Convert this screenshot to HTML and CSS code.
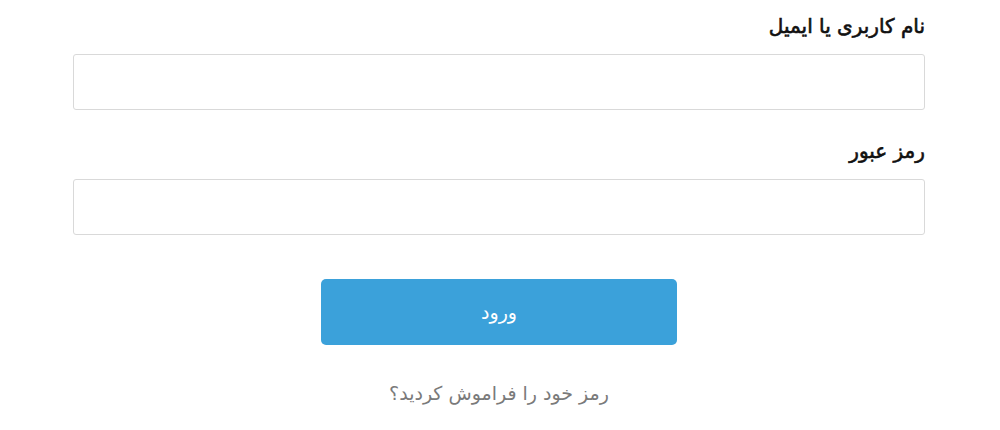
FILE: index.html
```html
<!DOCTYPE html>
<html lang="fa" dir="rtl">
<head>
<meta charset="utf-8">
<link rel="stylesheet" href="styles.css">
</head>
<body>
<form class="login">
  <div class="field">
    <label class="label">نام کاربری یا ایمیل</label>
    <input class="input" type="text">
  </div>
  <div class="field">
    <label class="label">رمز عبور</label>
    <input class="input" type="password">
  </div>
  <div class="actions">
    <button class="btn" type="button">ورود</button>
  </div>
  <div class="forgot"><a href="#" class="forgot-link">رمز خود را فراموش کردید؟</a></div>
</form>
</body>
</html>
```
FILE: styles.css
```css
html, body {
  margin: 0;
  padding: 0;
  background: #fff;
}
body {
  font-family: "DejaVu Sans", "Noto Sans", sans-serif;
  width: 1000px;
  height: 430px;
  overflow: hidden;
}
.login {
  padding: 7px 75px 0 73px;
  display: flex;
  flex-direction: column;
}
.field {
  display: flex;
  flex-direction: column;
  margin-bottom: 22px;
}
.label {
  font-size: 20px;
  font-weight: normal;
  -webkit-text-stroke: 0.6px #111;
  color: #111;
  height: 38px;
  line-height: 38px;
  margin-bottom: 9px;
}
.input {
  height: 56px;
  box-sizing: border-box;
  border: 1px solid #d9d9d9;
  border-radius: 3px;
  background: #fff;
  margin: 0;
  outline: none;
}
.actions {
  display: flex;
  justify-content: center;
  margin-top: 22px;
}
.btn {
  width: 356px;
  height: 66px;
  background: #3ba1da;
  color: #fff;
  border: none;
  border-radius: 5px;
  font-family: inherit;
  font-size: 19px;
}
.forgot {
  text-align: center;
  margin-top: 37px;
}
.forgot-link {
  color: #7a7a7a;
  font-size: 19px;
  text-decoration: none;
}
```
